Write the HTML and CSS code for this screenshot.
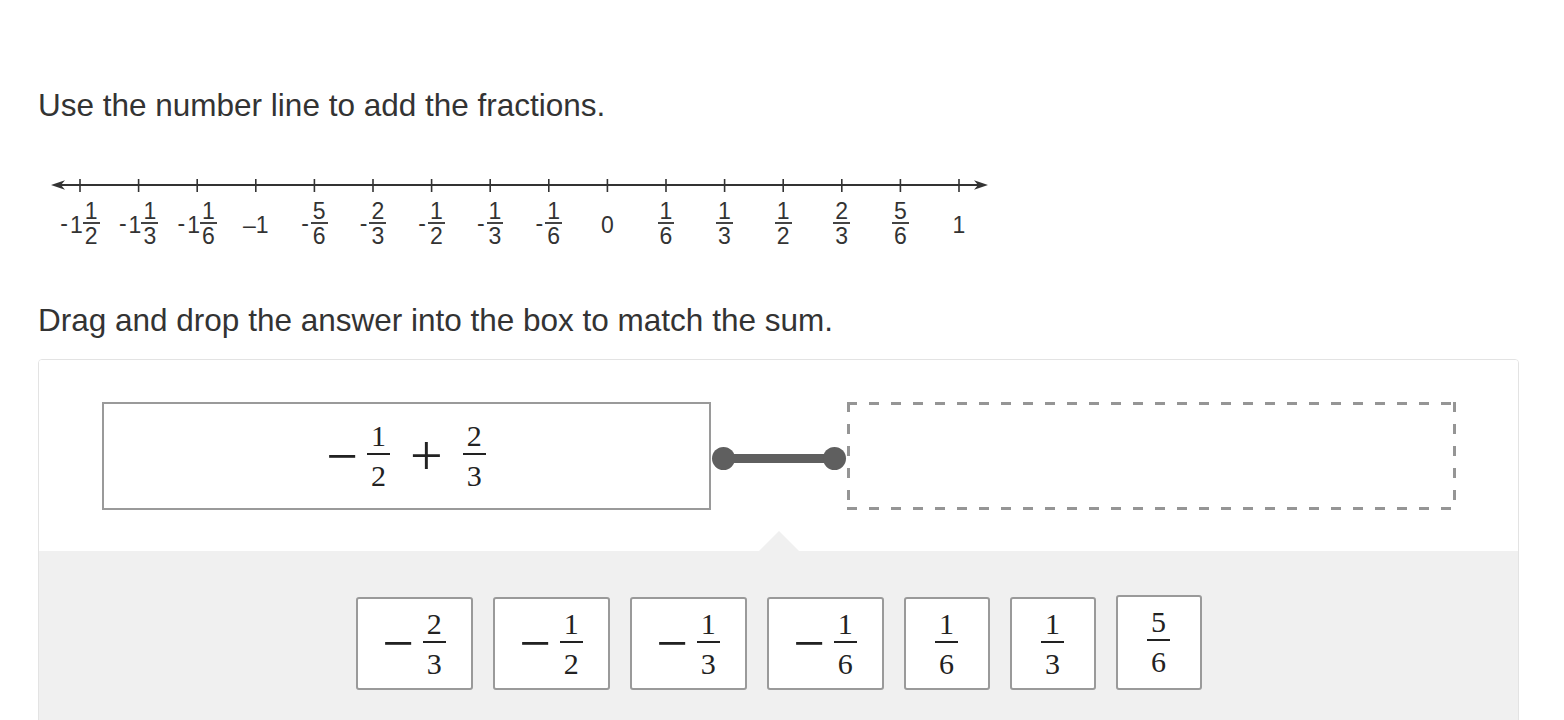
FILE: index.html
```html
<!DOCTYPE html>
<html lang="en">
<head>
<meta charset="utf-8">
<title>Add fractions on a number line</title>
<link rel="stylesheet" href="styles.css">
</head>
<body>
<main class="page">
  <p class="prompt">Use the number line to add the fractions.</p>

  <div class="numberline">
    <svg class="axis" width="952" height="20" viewBox="0 0 952 20" aria-hidden="true">
      <line x1="20" y1="10" x2="944" y2="10" stroke="#333" stroke-width="2"/>
      <path d="M13 10 L27 5.2 L23 10 L27 14.8 Z" fill="#333"/>
      <path d="M950 10 L936 5.2 L940 10 L936 14.8 Z" fill="#333"/>
      <g stroke="#333" stroke-width="1.6">
        <line x1="42" y1="4" x2="42" y2="17"/>
        <line x1="100.6" y1="4" x2="100.6" y2="17"/>
        <line x1="159.2" y1="4" x2="159.2" y2="17"/>
        <line x1="217.8" y1="4" x2="217.8" y2="17"/>
        <line x1="276.4" y1="4" x2="276.4" y2="17"/>
        <line x1="335" y1="4" x2="335" y2="17"/>
        <line x1="393.6" y1="4" x2="393.6" y2="17"/>
        <line x1="452.2" y1="4" x2="452.2" y2="17"/>
        <line x1="510.8" y1="4" x2="510.8" y2="17"/>
        <line x1="569.4" y1="4" x2="569.4" y2="17"/>
        <line x1="628" y1="4" x2="628" y2="17"/>
        <line x1="686.6" y1="4" x2="686.6" y2="17"/>
        <line x1="745.2" y1="4" x2="745.2" y2="17"/>
        <line x1="803.8" y1="4" x2="803.8" y2="17"/>
        <line x1="862.4" y1="4" x2="862.4" y2="17"/>
        <line x1="921" y1="4" x2="921" y2="17"/>
      </g>
    </svg>
    <div class="labels">
      <div class="lab"><span class="neg">-</span><span class="whole mixed">1</span><span class="frac"><span class="n">1</span><span class="d">2</span></span></div>
      <div class="lab"><span class="neg">-</span><span class="whole mixed">1</span><span class="frac"><span class="n">1</span><span class="d">3</span></span></div>
      <div class="lab"><span class="neg">-</span><span class="whole mixed">1</span><span class="frac"><span class="n">1</span><span class="d">6</span></span></div>
      <div class="lab"><span class="whole">–1</span></div>
      <div class="lab"><span class="neg">-</span><span class="frac"><span class="n">5</span><span class="d">6</span></span></div>
      <div class="lab"><span class="neg">-</span><span class="frac"><span class="n">2</span><span class="d">3</span></span></div>
      <div class="lab"><span class="neg">-</span><span class="frac"><span class="n">1</span><span class="d">2</span></span></div>
      <div class="lab"><span class="neg">-</span><span class="frac"><span class="n">1</span><span class="d">3</span></span></div>
      <div class="lab"><span class="neg">-</span><span class="frac"><span class="n">1</span><span class="d">6</span></span></div>
      <div class="lab"><span class="whole">0</span></div>
      <div class="lab"><span class="frac"><span class="n">1</span><span class="d">6</span></span></div>
      <div class="lab"><span class="frac"><span class="n">1</span><span class="d">3</span></span></div>
      <div class="lab"><span class="frac"><span class="n">1</span><span class="d">2</span></span></div>
      <div class="lab"><span class="frac"><span class="n">2</span><span class="d">3</span></span></div>
      <div class="lab"><span class="frac"><span class="n">5</span><span class="d">6</span></span></div>
      <div class="lab"><span class="whole">1</span></div>
    </div>
  </div>

  <p class="prompt prompt-drag">Drag and drop the answer into the box to match the sum.</p>

  <section class="panel">
    <div class="match">
      <div class="expr-box">
        <span class="op minus">−</span>
        <span class="mfrac"><span class="n">1</span><span class="d">2</span></span>
        <span class="op plus">+</span>
        <span class="mfrac"><span class="n">2</span><span class="d">3</span></span>
      </div>
      <div class="connector"><span class="dot"></span><span class="bar"></span><span class="dot"></span></div>
      <div class="drop"></div>
    </div>
    <div class="tray">
      <div class="tile wide"><span class="op tminus">−</span><span class="mfrac"><span class="n">2</span><span class="d">3</span></span></div>
      <div class="tile wide"><span class="op tminus">−</span><span class="mfrac"><span class="n">1</span><span class="d">2</span></span></div>
      <div class="tile wide"><span class="op tminus">−</span><span class="mfrac"><span class="n">1</span><span class="d">3</span></span></div>
      <div class="tile wide"><span class="op tminus">−</span><span class="mfrac"><span class="n">1</span><span class="d">6</span></span></div>
      <div class="tile"><span class="mfrac"><span class="n">1</span><span class="d">6</span></span></div>
      <div class="tile"><span class="mfrac"><span class="n">1</span><span class="d">3</span></span></div>
      <div class="tile raised"><span class="mfrac"><span class="n">5</span><span class="d">6</span></span></div>
    </div>
  </section>
</main>
</body>
</html>
```

FILE: styles.css
```css
html, body {
  margin: 0;
  padding: 0;
  background: #ffffff;
}

body {
  font-family: "Liberation Sans", Arial, sans-serif;
  color: #333333;
}

.page {
  padding: 87px 0 0 38px;
}

.prompt {
  margin: 0;
  font-size: 31.5px;
  line-height: 36px;
  color: #333333;
}

.prompt-drag {
  margin-top: 56px;
}

/* number line */
.numberline {
  margin-top: 52px;
  width: 952px;
}

.axis {
  display: block;
}

.labels {
  display: flex;
  margin-top: 5px;
  padding-left: 12.7px;
}

.lab {
  width: 58.6px;
  flex: 0 0 58.6px;
  height: 46px;
  display: flex;
  justify-content: center;
  align-items: center;
  font-size: 23px;
  color: #333333;
}

.lab .neg {
  line-height: 20px;
  margin-right: 2px;
}

.lab .whole {
  line-height: 20px;
  margin-top: 4px;
}

.lab .whole.mixed {
  margin-right: 0;
}

.frac {
  display: inline-flex;
  flex-direction: column;
  align-items: stretch;
  text-align: center;
}

.frac .n {
  line-height: 20px;
  padding: 0 2px 1px;
  border-bottom: 2px solid #444444;
}

.frac .d {
  line-height: 20px;
  padding-top: 2px;
}

/* panel */
.panel {
  margin-top: 21px;
  width: 1481px;
  box-sizing: border-box;
  border: 1px solid #e3e3e3;
  border-radius: 4px;
  overflow: hidden;
}

.match {
  display: flex;
  justify-content: center;
  align-items: center;
  padding: 42px 0 41px;
  background: #ffffff;
}

.expr-box {
  width: 609px;
  height: 108px;
  box-sizing: border-box;
  border: 2px solid #9a9a9a;
  display: flex;
  justify-content: center;
  align-items: center;
}

.connector {
  width: 136px;
  box-sizing: border-box;
  padding: 0 1px;
  margin-top: 4px;
  display: flex;
  align-items: center;
}

.connector .dot {
  width: 23px;
  height: 23px;
  flex: 0 0 23px;
  border-radius: 50%;
  background: #5f5f5f;
}

.connector .bar {
  flex: 1;
  height: 9px;
  margin: 0 -2px;
  background: #5f5f5f;
}

.drop {
  width: 609px;
  height: 108px;
  box-sizing: border-box;
  background:
    repeating-linear-gradient(90deg, #959595 0 10px, transparent 10px 22px) left top / 100% 3px no-repeat,
    repeating-linear-gradient(90deg, #959595 0 10px, transparent 10px 22px) left bottom / 100% 3px no-repeat,
    repeating-linear-gradient(180deg, #959595 0 10px, transparent 10px 22px) left top / 3px 100% no-repeat,
    repeating-linear-gradient(180deg, #959595 0 10px, transparent 10px 22px) right top / 3px 100% no-repeat;
}

/* math typography */
.mfrac {
  display: inline-flex;
  flex-direction: column;
  align-items: stretch;
  text-align: center;
  font-family: "Liberation Serif", "Times New Roman", serif;
  font-size: 30px;
  color: #222222;
}

.mfrac .n {
  line-height: 26px;
  padding: 0 4px 4px;
  border-bottom: 2px solid #222222;
}

.mfrac .d {
  line-height: 26px;
  padding-top: 8px;
}

.op {
  font-family: "Liberation Serif", "Times New Roman", serif;
  color: #222222;
  line-height: 1;
}

.op.minus {
  font-size: 56px;
  margin-right: 9px;
  margin-bottom: 1px;
}

.op.plus {
  font-size: 58px;
  margin: 0 20px 1px 20px;
}

.op.tminus {
  font-size: 56px;
  margin-right: 9px;
  margin-bottom: 1px;
}

/* tray */
.tray {
  position: relative;
  background: #f0f0f0;
  padding: 44px 0 40px;
  display: flex;
  justify-content: center;
  align-items: flex-end;
  gap: 20px;
}

.tray::before {
  content: "";
  position: absolute;
  left: 50%;
  top: -20px;
  transform: translateX(-50%);
  border-left: 20px solid transparent;
  border-right: 20px solid transparent;
  border-bottom: 20px solid #f0f0f0;
}

.tile {
  width: 86px;
  height: 93px;
  box-sizing: border-box;
  border: 2px solid #9a9a9a;
  border-radius: 3px;
  background: #ffffff;
  display: flex;
  justify-content: center;
  align-items: center;
}

.tile.wide {
  width: 117px;
}

.tile.raised {
  height: 95px;
  padding-bottom: 2px;
}
```
